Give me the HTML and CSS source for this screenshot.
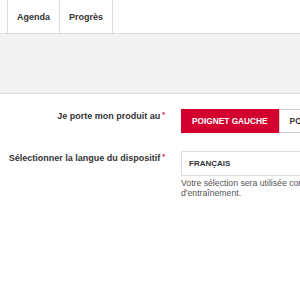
FILE: index.html
```html
<!DOCTYPE html>
<html lang="fr">
<head>
    <meta charset="UTF-8">
    <meta name="viewport" content="width=device-width, initial-scale=1.0">
    <title>Réglages</title>
    <link rel="stylesheet" href="styles.css">
</head>
<body>
    <nav class="topnav">
        <a class="nav-item" href="#">Agenda</a>
        <a class="nav-item" href="#">Progrès</a>
    </nav>
    <div class="band"></div>

    <form class="settings">
        <div class="row">
            <label class="label">Je porte mon produit au<span class="req">*</span></label>
            <div class="control">
                <div class="toggle">
                    <button type="button" class="opt active">Poignet gauche</button>
                    <button type="button" class="opt">Poignet droit</button>
                </div>
            </div>
        </div>
        <div class="row">
            <label class="label">Sélectionner la langue du dispositif<span class="req">*</span></label>
            <div class="control">
                <div class="select">Français</div>
                <p class="help">Votre sélection sera utilisée comme langue de votre dispositif d'entraînement.</p>
            </div>
        </div>
    </form>
</body>
</html>
```

FILE: styles.css
```css
html, body {
    overflow: hidden;
}
body {
    margin: 0;
    font-family: "Liberation Sans", Arial, sans-serif;
    color: #333;
    background-color: #fff;
    width: 300px;
}
.topnav {
    display: flex;
    height: 33px;
    padding-left: 7px;
    border-bottom: 1px solid #d9d9d9;
}
.nav-item {
    display: flex;
    align-items: center;
    padding: 0 9px;
    border-left: 1px solid #ddd;
    font-size: 9px;
    font-weight: bold;
    color: #333;
    text-decoration: none;
}
.nav-item:last-child {
    border-right: 1px solid #ddd;
}
.band {
    height: 59px;
    background-color: #f2f2f2;
    border-bottom: 1px solid #dcdcdc;
}
.settings {
    padding-top: 15px;
    width: 480px;
}
.row {
    display: grid;
    grid-template-columns: 165px 1fr;
    column-gap: 16px;
    margin-bottom: 18px;
}
.label {
    text-align: right;
    font-size: 9px;
    font-weight: bold;
    padding-top: 2px;
    white-space: nowrap;
}
.req {
    color: #d3002f;
    margin-left: 2px;
    font-size: 7px;
    vertical-align: top;
}
.toggle {
    display: flex;
}
.opt {
    height: 24px;
    padding: 0 10px;
    border: 1px solid #ccc;
    background-color: #fff;
    color: #333;
    font-family: inherit;
    font-size: 8.3px;
    font-weight: bold;
    text-transform: uppercase;
    white-space: nowrap;
}
.opt.active {
    background-color: #d3002f;
    border-color: #d3002f;
    color: #fff;
}
.select {
    height: 23px;
    line-height: 23px;
    width: 240px;
    padding-left: 7px;
    border: 1px solid #ddd;
    font-size: 8px;
    font-weight: bold;
    text-transform: uppercase;
}
.help {
    margin: 2px 0 0;
    width: 275px;
    font-size: 8.7px;
    line-height: 10px;
    color: #555;
}
```
